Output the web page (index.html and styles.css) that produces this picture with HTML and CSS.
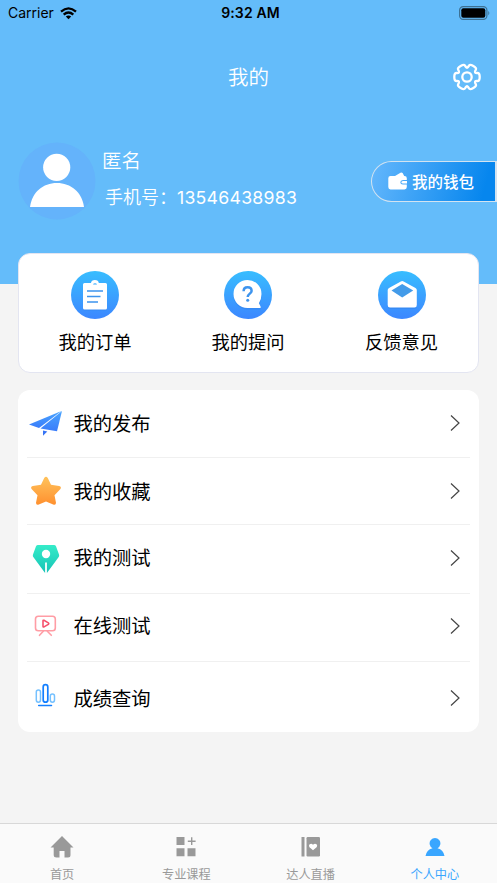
FILE: index.html
```html
<!DOCTYPE html>
<html lang="zh-CN">
<head>
<meta charset="utf-8">
<title>我的</title>
<link rel="stylesheet" href="styles.css">
</head>
<body>
<header class="hero">
  <div class="status">
    <div class="carrier">Carrier
      <svg width="17" height="13" viewBox="0 0 17 13"><g fill="none" stroke="#000" stroke-width="2.3"><path d="M1 4.7Q8.5 -2 16 4.7"/><path d="M3.7 7.6Q8.5 3.3 13.3 7.6"/></g><path d="M5.8 9.6Q8.500 7.300 11.200 9.600L8.500 12.300z"/></svg>
    </div>
    <time class="clock">9:32 AM</time>
    <svg class="battery" width="32" height="14" viewBox="0 0 32 14"><rect x=".6" y=".6" width="27.300" height="12.800" rx="3.600" fill="none" stroke="#3d7193" stroke-width="1.200"/><rect x="2.300" y="2.300" width="24" height="9.400" rx="2"/><path d="M29.300 4.700Q31.300 7 29.300 9.300z" fill="#3d7193"/></svg>
  </div>
  <div class="navbar">
    <h1>我的</h1>
    <svg class="gear" width="30" height="30" viewBox="-15 -15 30 30" fill="none" stroke="#fff" stroke-width="2.300" stroke-linecap="round">
      <defs><path id="tooth" d="M8.200 -4.700C8.800 -3.700 9.800 -4 10.900 -4C12.200 -3.900 12.700 -3 12.700 0C12.700 3 12.200 3.900 10.900 4C9.800 4 8.800 3.700 8.200 4.700"/></defs>
      <use href="#tooth"/><use href="#tooth" transform="rotate(60)"/><use href="#tooth" transform="rotate(120)"/><use href="#tooth" transform="rotate(180)"/><use href="#tooth" transform="rotate(240)"/><use href="#tooth" transform="rotate(300)"/>
      <circle r="4.700"/>
    </svg>
  </div>
  <div class="profile">
    <svg class="avatar" width="78" height="78" viewBox="0 0 78 78"><circle cx="39" cy="39" r="38.500" fill="#64b3fb"/><circle cx="38.700" cy="25.300" r="13.600" fill="#fff"/><path d="M12 65C14 50 25 41 38.900 41S64 50 66 65z" fill="#fff"/></svg>
    <div class="who">
      <div class="name">匿名</div>
      <div class="phone">手机号：<span class="digits">13546438983</span></div>
    </div>
    <div class="wallet">
      <svg width="20" height="18" viewBox="0 0 20 18" fill="#fff"><path d="M7 4L12.500.7Q13.800 0 14.600 1L16.200 4z"/><path fill-rule="evenodd" d="M2.500 4H16.500Q18.800 4 18.800 6.300V8H15Q12.300 8.200 12.300 10.300T15 12.600H18.800V15Q18.800 17.400 16.500 17.400H2.500Q.3 17.400.3 15V6.300Q.3 4 2.500 4z"/><path d="M15 9H19V11.600H15Q13.300 11.400 13.300 10.300T15 9z"/></svg>
      <span>我的钱包</span>
    </div>
  </div>
</header>

<main>
  <section class="quick">
    <div class="quick-item">
      <svg width="48" height="48" viewBox="0 0 48 48"><defs><linearGradient id="sky" x1="0" y1="0" x2="0" y2="1"><stop offset="0" stop-color="#38bdff"/><stop offset="1" stop-color="#3c87ff"/></linearGradient></defs><circle cx="24" cy="24" r="24" fill="url(#sky)"/><rect x="12" y="13.500" width="24" height="26" rx="1.500" fill="#2d7be0" opacity=".35"/><path fill="#fff" fill-rule="evenodd" d="M13.500 12H20Q20.300 9 23.900 9T27.800 12H34.500Q36 12 36 13.500V37Q36 38.500 34.500 38.500H13.500Q12 38.500 12 37V13.500Q12 12 13.500 12zM22 13.600H26Q25.600 12.300 24 12.300T22 13.600z"/><path d="M16 20H32M16 25.500H29.500M16 31H27" stroke="#3d94ee" stroke-width="1.500"/></svg>
      <span>我的订单</span>
    </div>
    <div class="quick-item">
      <svg width="48" height="48" viewBox="0 0 48 48"><circle cx="24" cy="24" r="24" fill="url(#sky)"/><path d="M23.500 10.500A14 14 0 0 0 23.500 38.500H36.500V36L35 33.500Q38 29 37.500 24A14 14 0 0 0 23.500 10.500z" fill="#2d7be0" opacity=".35"/><path d="M23.500 9A14 14 0 0 0 23.500 37H36.600V35.500L34.900 32.300Q37.500 28.500 37.500 23A14 14 0 0 0 23.500 9z" fill="#fff"/><path d="M19.600 20.200Q19.600 16.200 23.600 16.200T27.600 19.900C27.600 22.500 23.700 22.800 23.700 26" fill="none" stroke="#3d94ee" stroke-width="2.500"/><circle cx="23.700" cy="29.300" r="1.500" fill="#3d94ee"/></svg>
      <span>我的提问</span>
    </div>
    <div class="quick-item">
      <svg width="48" height="48" viewBox="0 0 48 48"><circle cx="24" cy="24" r="24" fill="url(#sky)"/><path d="M10 19L24 11.500L38.500 19V36Q38.500 38 36.500 38H12Q10 38 10 36z" fill="#2d7be0" opacity=".35"/><path d="M11 17L22.800 10.500Q24.200 9.700 25.600 10.500L37.500 17Q38.800 17.800 38.800 19V34Q38.800 36.500 36.500 36.500H12Q9.700 36.500 9.700 34V19Q9.700 17.800 11 17z" fill="#fff"/><path d="M13.500 19.500L24.200 13L35.200 19.500L24.200 26.500z" fill="#439be9"/></svg>
      <span>反馈意见</span>
    </div>
  </section>

  <section class="menu">
    <div class="row">
      <svg class="icon" width="36" height="36" viewBox="0 0 36 36"><defs><linearGradient id="plane" x1="0" y1="0" x2="0" y2="1"><stop offset="0" stop-color="#4aa5ff"/><stop offset="1" stop-color="#3a7cfa"/></linearGradient></defs><path d="M33.500 6L1 19.500L11 23z" fill="url(#plane)"/><path d="M34 6L12.500 23.500L29 26.200z" fill="url(#plane)"/><path d="M15 25.500L19.300 26.500L15 30.800z" fill="#3674f5"/></svg>
      <span class="label">我的发布</span>
      <svg class="chevron" width="12" height="18" viewBox="0 0 12 18"><path d="M2 1.500L10 9L2 16.500"/></svg>
    </div>
    <div class="row">
      <svg class="icon" width="36" height="36" viewBox="0 0 36 36"><defs><linearGradient id="gold" x1="0" y1="0" x2="0" y2="1"><stop offset="0" stop-color="#ffc35c"/><stop offset="1" stop-color="#ff902f"/></linearGradient></defs><path d="M16.200 5Q18 2.300 19.800 5L23 11.800L31.200 13Q34 13.900 32.200 16.300L26.500 22.300L28 29.800Q28 32.500 25.200 31.600L18 28.500L10.800 31.600Q8 32.500 8 29.800L9.500 22.300L3.800 16.300Q2 13.900 4.800 13L13 11.800z" fill="url(#gold)"/></svg>
      <span class="label">我的收藏</span>
      <svg class="chevron" width="12" height="18" viewBox="0 0 12 18"><path d="M2 1.500L10 9L2 16.500"/></svg>
    </div>
    <div class="row row-test">
      <svg class="icon" width="36" height="36" viewBox="0 0 36 36"><defs><linearGradient id="mint" x1="0" y1="0" x2="0" y2="1"><stop offset="0" stop-color="#35ecc9"/><stop offset="1" stop-color="#17c3b6"/></linearGradient></defs><path d="M10 5H26Q27.400 5 28 6.200L31 14.500Q31.500 16 30.700 17L19.300 32.500Q18 34 16.700 32.500L5.300 17Q4.500 16 5 14.500L8 6.200Q8.600 5 10 5z" fill="url(#mint)"/><circle cx="18" cy="14" r="4.200" fill="#fff"/><path d="M18 22.500V34" stroke="#fff" stroke-width="1.800"/></svg>
      <span class="label">我的测试</span>
      <svg class="chevron" width="12" height="18" viewBox="0 0 12 18"><path d="M2 1.500L10 9L2 16.500"/></svg>
    </div>
    <div class="row row-online">
      <svg class="icon" width="36" height="36" viewBox="0 0 36 36" fill="none" stroke="#ff9da5" stroke-width="1.600" stroke-linecap="round"><rect x="7.500" y="8.300" width="19.800" height="14.500" rx="2.800"/><path d="M15.300 23.300L11.500 27.300M19.300 23.300L23.300 27.300"/><path d="M15 12.800Q15 12.100 16 12.300L20.300 14.800Q21.300 15.600 20.300 16.400L16 18.900Q15 19.300 15 18.300z" stroke="#f5516c"/></svg>
      <span class="label">在线测试</span>
      <svg class="chevron" width="12" height="18" viewBox="0 0 12 18"><path d="M2 1.500L10 9L2 16.500"/></svg>
    </div>
    <div class="row row-score">
      <svg class="icon" width="36" height="36" viewBox="0 0 36 36" fill="none" stroke="#75c1ff" stroke-width="1.500" stroke-linecap="round"><rect x="8.300" y="9.900" width="4.200" height="12.300" rx="2.100"/><rect x="22.300" y="14.100" width="4.200" height="8.100" rx="2.100"/><rect x="15.200" y="4.700" width="4.600" height="17.500" rx="2.300" stroke="#137fff" stroke-width="1.700"/><path d="M10.700 25.600H23.500" stroke="#137fff"/></svg>
      <span class="label">成绩查询</span>
      <svg class="chevron" width="12" height="18" viewBox="0 0 12 18"><path d="M2 1.500L10 9L2 16.500"/></svg>
    </div>
  </section>
</main>

<nav class="tabs">
  <div class="tab">
    <svg width="24" height="24" viewBox="0 0 24 24" fill="currentColor"><path d="M12 1L23.500 12.500H20.500V20Q20.500 22.500 18 22.500H14.500V16H9.500V22.500H6.500Q3.700 22.500 3.700 20V12.500H.5z"/></svg>
    <span>首页</span>
  </div>
  <div class="tab">
    <svg width="24" height="24" viewBox="0 0 24 24" fill="currentColor"><path d="M2.500 2H10.500V10H2.500zM2.500 13.200H10.500V21.200H2.500zM13.500 13.200H21.500V21.200H13.500zM17 2.300H18.400V5.500H21.600V6.900H18.400V10H17V6.900H13.800V5.500H17z"/></svg>
    <span>专业课程</span>
  </div>
  <div class="tab">
    <svg width="24" height="24" viewBox="0 0 24 24" fill="currentColor"><path d="M2.500 2H5.500V21.500H2.500z"/><rect x="7.500" y="2" width="13.500" height="19.500" rx="1.200"/><path d="M14 15.300L10.500 12.200Q9.400 10.600 10.600 9.300Q12.300 7.900 14 9.700Q15.900 7.900 17.600 9.300Q18.800 10.600 17.600 12.200z" fill="#fff"/></svg>
    <span>达人直播</span>
  </div>
  <div class="tab active">
    <svg width="24" height="24" viewBox="0 0 24 24" fill="currentColor"><path d="M2.500 21Q3.500 14.800 9.500 13.200A5.400 5.400 0 1 1 14.500 13.200Q20.500 14.800 21.500 21z"/></svg>
    <span>个人中心</span>
  </div>
</nav>
</body>
</html>
```
FILE: styles.css
```css
* { box-sizing: border-box; }

body {
  margin: 0;
  height: 883px;
  display: flex;
  flex-direction: column;
  overflow: hidden;
  background: #f4f4f4;
  color: #000;
  font-family: "Noto Sans CJK SC", sans-serif;
}

svg { display: block; flex: none; }

.hero {
  height: 284px;
  flex: none;
  background: #64bcfa;
  color: #fff;
}

.status {
  height: 26px;
  padding: 0 6px 0 8px;
  display: grid;
  grid-template-columns: 1fr auto 1fr;
  align-items: center;
  color: #000;
  font: 14px/26px Inter, sans-serif;
}

.carrier { display: flex; align-items: center; gap: 6px; }
.clock { font-weight: 600; letter-spacing: .15px; padding-left: 2px; }
.battery { justify-self: end; }

.navbar {
  height: 102px;
  padding: 0 15px;
  display: grid;
  grid-template-columns: 1fr auto 1fr;
  align-items: center;
}

.navbar h1 {
  grid-column: 2;
  margin: 0;
  padding-bottom: 2px;
  font-size: 20.5px;
  font-weight: 350;
  line-height: 30px;
}

.gear { justify-self: end; }

.profile {
  height: 106px;
  padding-left: 18px;
  display: flex;
  align-items: center;
}

.who { margin-left: 6px; padding-bottom: 4px; }
.name { font-size: 19.5px; line-height: 36px; font-weight: 350; }
.phone { padding-left: 3px; font-size: 18px; line-height: 36px; font-weight: 350; white-space: nowrap; }
.digits { font-family: Inter, sans-serif; font-size: 17.7px; font-weight: 400; letter-spacing: .25px; }

.wallet {
  width: 126px;
  height: 41px;
  margin-left: auto;
  padding-left: 16px;
  display: flex;
  align-items: center;
  gap: 4px;
  border: 1.5px solid #d3e3f0;
  border-right-width: 2px;
  border-radius: 21px 0 0 21px;
  background: linear-gradient(105deg, #64b7fc, #0686ee 90%);
  font-size: 15.5px;
  font-weight: 500;
  white-space: nowrap;
}

main { padding: 0 18px; }

.quick {
  height: 120px;
  margin-top: -31px;
  padding: 17px 0 0;
  display: grid;
  grid-template-columns: 152px 154px 1fr;
  border: 1px solid #e3e5f1;
  border-radius: 12px;
  background: #fff;
}

.quick-item {
  display: flex;
  flex-direction: column;
  align-items: center;
  gap: 9px;
  font-size: 18.3px;
  line-height: 27px;
}

.menu {
  margin-top: 17px;
  padding: 0 9px;
  border-radius: 12px;
  background: #fff;
}

.row {
  height: 67px;
  padding: 0 9px 0 1px;
  display: flex;
  align-items: center;
  border-bottom: 1px solid #f0f0f0;
}

.row:first-child { height: 68px; padding-bottom: 1px; }
.row-test { height: 69px; padding-bottom: 2px; }
.row-online { height: 68px; padding-bottom: 4px; }
.row-score { height: 70px; border-bottom: 0; padding-top: 2px; }

.label { margin-left: 9.5px; font-size: 19.3px; line-height: 28px; }
.row-test .label, .row-online .label { padding-bottom: 2px; }

.chevron {
  margin-left: auto;
  fill: none;
  stroke: #444;
  stroke-width: 1.2;
}

.tabs {
  height: 60px;
  margin-top: auto;
  flex: none;
  display: grid;
  grid-template-columns: repeat(4, 1fr);
  border-top: 1px solid #d8d8d8;
  background: #fafafa;
}

.tab {
  padding-top: 11px;
  display: flex;
  flex-direction: column;
  align-items: center;
  gap: 6px;
  color: #999;
  font-size: 12.2px;
  line-height: 18px;
}

.active { color: #39a6ff; }
```
